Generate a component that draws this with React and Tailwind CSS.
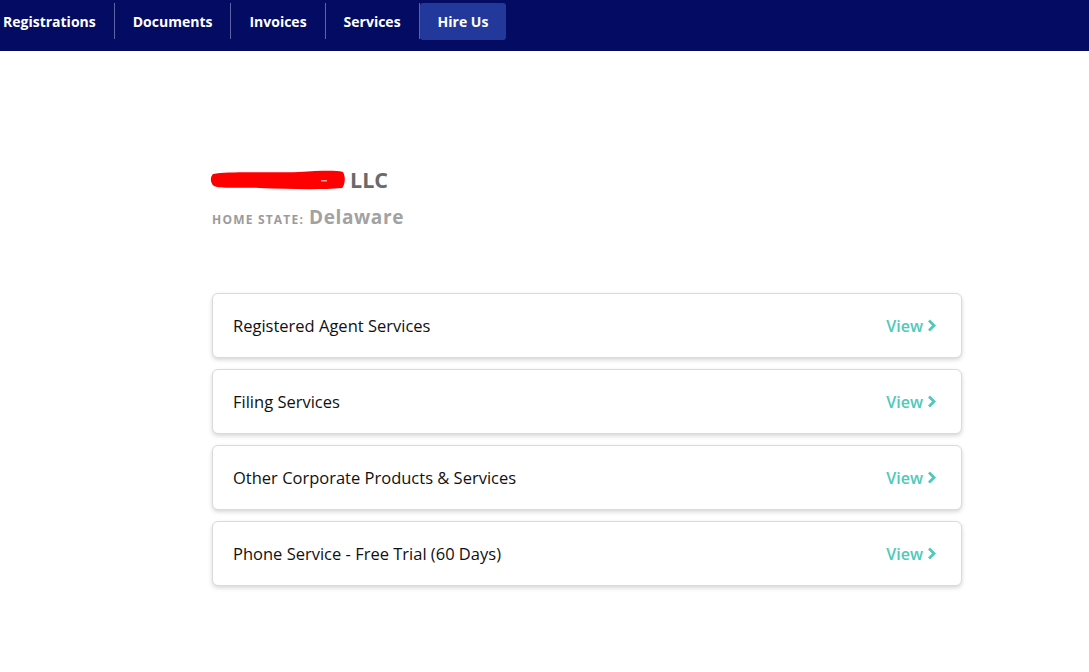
import React from 'react';

const navItems = ['Registrations', 'Documents', 'Invoices', 'Services'];

const services = [
    'Registered Agent Services',
    'Filing Services',
    'Other Corporate Products & Services',
    'Phone Service - Free Trial (60 Days)',
];

const Chevron = () => (
    <svg width="9" height="13" viewBox="0 0 9 13" className="ml-[4px]">
        <polyline points="2,1.5 7,6.5 2,11.5" fill="none" stroke="#4ec9ba" strokeWidth="2.8" />
    </svg>
);

const App = () => {
    return (
        <div className="min-h-screen bg-white" style={{ fontFamily: '"Open Sans", sans-serif' }}>
            {/* Top nav */}
            <nav className="h-[51px] bg-[#030b63] flex items-start">
                {navItems.map((item, i) => (
                    <React.Fragment key={item}>
                        <a className={`h-[37px] mt-[3px] flex items-center text-[14px] font-bold text-white ${i === 0 ? 'pl-[3px] pr-[18px]' : 'px-[18px]'}`}>
                            {item}
                        </a>
                        <div className="w-px h-[36px] mt-[3px] bg-[#5d63a3]" />
                    </React.Fragment>
                ))}
                <a className="h-[37px] mt-[3px] px-[18px] flex items-center text-[14px] font-bold text-white bg-[#22399b] rounded-[3px]">
                    Hire Us
                </a>
            </nav>

            {/* Main */}
            <main className="pl-[212px] pt-[115px]">
                <div className="flex items-center h-7">
                    <svg width="138" height="24" viewBox="0 0 138 24" className="-ml-[3px] mr-[3px]">
                        <path
                            d="M4 6 C20 3, 60 5, 90 4 C110 3, 125 2, 134 4 C137 9, 136 17, 133 20 C110 22, 80 21, 50 20 C30 19, 12 21, 5 18 C1 15, 1 9, 4 6 Z"
                            fill="#ff0000"
                        />
                        <rect x="112" y="12" width="6" height="1.5" fill="#ff9c9c" />
                    </svg>
                    <span className="text-[21.5px] font-bold text-[#6a6a6a]">LLC</span>
                </div>
                <div className="mt-[9px] flex items-baseline h-6">
                    <span className="text-[12px] font-bold uppercase tracking-[1.2px] text-[#9b9b9b]">Home State:</span>
                    <span className="ml-[5px] text-[19px] font-bold text-[#a2a2a2] tracking-[0.6px]">Delaware</span>
                </div>

                <div className="mt-[66px] w-[750px] flex flex-col gap-[11px]">
                    {services.map((s) => (
                        <div
                            key={s}
                            className="h-[65px] rounded-[6px] border border-[#dadada] bg-white shadow-[0_2px_4px_rgba(0,0,0,0.16)] flex items-center justify-between pl-[20px] pr-[25px]"
                        >
                            <span className="pt-[2px] text-[16.5px] text-[#111111]">{s}</span>
                            <span className="flex items-center text-[16px] font-semibold text-[#4ec9ba]">
                                View
                                <Chevron />
                            </span>
                        </div>
                    ))}
                </div>
            </main>
        </div>
    );
};

export default App;
